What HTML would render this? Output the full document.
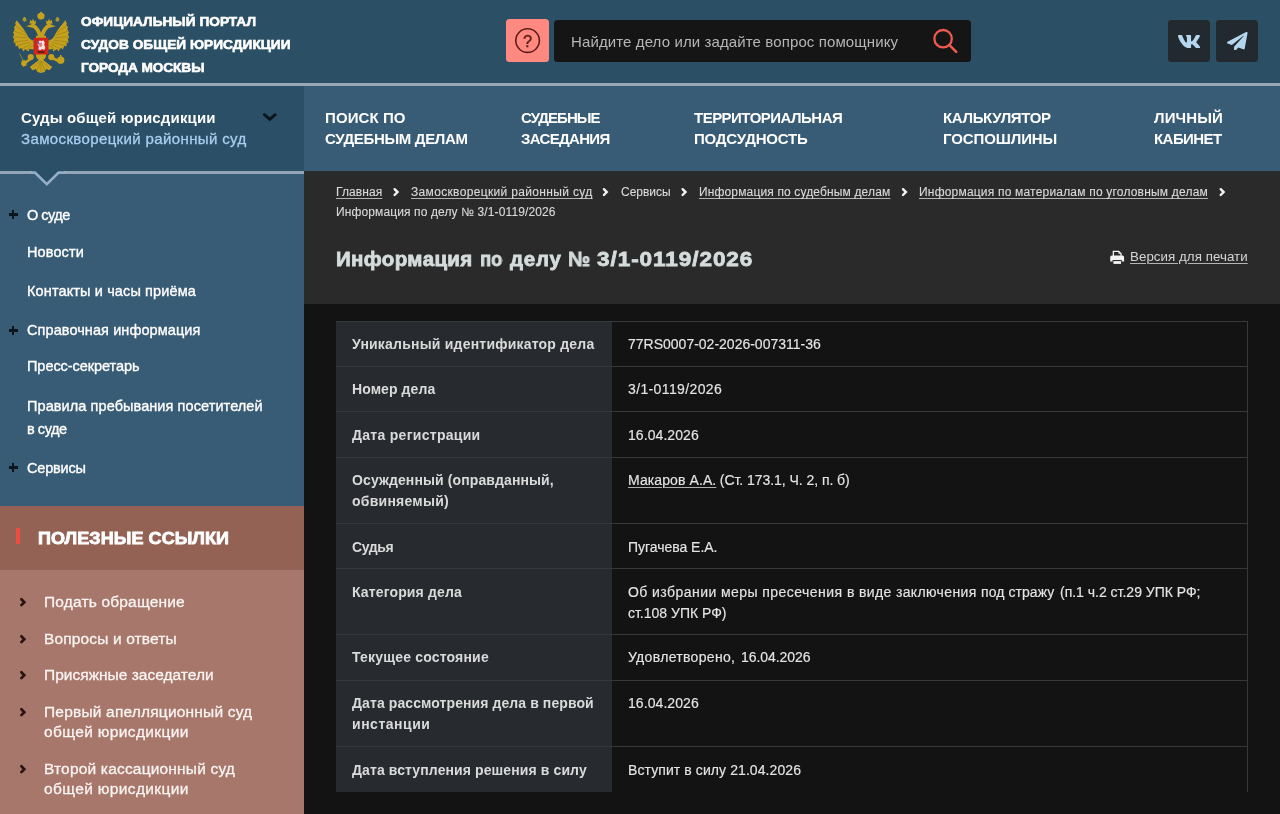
<!DOCTYPE html>
<html lang="ru">
<head>
<meta charset="utf-8">
<title>Информация по делу № 3/1-0119/2026</title>
<style>
*{box-sizing:border-box;margin:0;padding:0}
html,body{width:1280px;height:814px;overflow:hidden;background:#131313}
body{font-family:"Liberation Sans",sans-serif;color:#fff;position:relative}
.a{position:absolute}
.x{position:absolute;white-space:nowrap;line-height:normal;will-change:transform}
.u{text-decoration:underline;text-decoration-thickness:1px;text-underline-offset:2px;text-decoration-color:rgba(215,215,215,.8)}
#header{left:0;top:0;width:1280px;height:83px;background:#2b5065}
#hline{left:0;top:83px;width:1280px;height:3px;background:#98a8b6}
#court{left:0;top:86px;width:304px;height:85px;background:#2a4f66}
#nav{left:304px;top:86px;width:976px;height:85px;background:#385c75}
#side{left:0;top:171px;width:304px;height:335px;background:#385c75}
#sline{left:0;top:171px;width:304px;height:3px;background:#93a6b8}
#ulhb{left:0;top:506px;width:304px;height:64px;background:#936254}
#ulb{left:0;top:570px;width:304px;height:244px;background:#a7776b}
#ctop{left:304px;top:171px;width:976px;height:133px;background:#2b2a2a}
#cbody{left:304px;top:304px;width:976px;height:510px;background:#131313}
.ht{font-weight:bold;font-size:13px;-webkit-text-stroke:.6px #fff}
.ph{font-size:15px;color:#b6b6b6}
.c1{font-size:15px;font-weight:bold;color:#fff}
.c2{font-size:15px;color:#a9cef1;-webkit-text-stroke:.3px #a9cef1}
.nv{font-weight:bold;font-size:15px;color:#fff}
.sm{font-size:14.5px;color:#fff;-webkit-text-stroke:.35px #fff}
.ulh{font-size:16.5px;font-weight:bold;color:#fff;-webkit-text-stroke:.8px #fff}
.ul{font-size:15.5px;color:#faf4f2;-webkit-text-stroke:.3px #faf4f2}
.bc{font-size:12px;color:#d9d9d9;-webkit-text-stroke:.12px #d9d9d9}
.h1{font-size:20.5px;font-weight:bold;color:#d5dcdc;-webkit-text-stroke:.8px #d5dcdc}
.pv{font-size:13.3px;color:#d6d6d6}
.tl{font-size:14px;font-weight:bold;color:#dadada}
.tv{font-size:14px;color:#e4e4e4;-webkit-text-stroke:.15px #e4e4e4}
.plus{position:absolute;left:8.5px;width:9px;height:9px}
.plus:before{content:"";position:absolute;left:0;top:3.2px;width:9px;height:2.6px;background:#0b151c}
.plus:after{content:"";position:absolute;left:3.2px;top:0;width:2.6px;height:9px;background:#0b151c}
#table{position:absolute;left:336px;top:0;width:912px;height:814px}
.row{position:absolute;left:0;width:912px;border-top:1px solid #383838;border-right:1px solid #383838}
.row i{position:absolute;left:0;top:-1px;bottom:0;width:276px;background:#272b2f;border-top:1px solid #34383c}
</style>
</head>
<body>
<div class="a" id="header"></div>
<div class="a" id="hline"></div>
<div class="a" id="court"></div>
<div class="a" id="nav"></div>
<div class="a" id="side"></div>
<div class="a" id="sline"></div>
<div class="a" id="ulhb"></div>
<div class="a" id="ulb"></div>
<div class="a" id="ctop"></div>
<div class="a" id="cbody"></div>

<svg class="a" id="emblem" style="left:6px;top:4px" width="70" height="74" viewBox="0 0 770 814">
<g fill="#c5a11e">
<path d="M385 82 L400 100 C425 105 432 135 418 158 C405 176 365 176 352 158 C338 135 345 105 370 100Z"/>
<path d="M205 140 L222 156 L226 184 L204 194 L184 184 L184 158Z" opacity=".85"/><path d="M565 140 L548 156 L544 184 L566 194 L586 184 L586 158Z" opacity=".85"/>
<path d="M374 356 C366 312 344 268 300 238" fill="none" stroke="#c5a11e" stroke-width="42" stroke-linecap="round"/>
<path d="M396 356 C404 312 426 268 470 238" fill="none" stroke="#c5a11e" stroke-width="42" stroke-linecap="round"/>
<path d="M296 216 L222 246 L300 264Z"/><path d="M474 216 L548 246 L470 264Z"/>
<path d="M258 214 L268 172 L286 190 L296 160 L310 192 L328 180 L326 222Z"/><path d="M512 214 L502 172 L484 190 L474 160 L460 192 L442 180 L444 222Z"/>
<path d="M118 178 L100 215 L108 225 L86 262 L97 272 L76 318 L90 326 L74 372 L90 378 L82 425 L102 424 L106 468 L128 458 L146 500 L164 482 L196 522 L208 496 L250 522 L256 494 L305 500 L305 400 C272 396 242 372 228 334 C208 284 168 246 118 178Z"/>
<path d="M652 178 L670 215 L662 225 L684 262 L673 272 L694 318 L680 326 L696 372 L680 378 L688 425 L668 424 L664 468 L642 458 L624 500 L606 482 L574 522 L562 496 L520 522 L514 494 L465 500 L465 400 C498 396 528 372 542 334 C562 284 602 246 652 178Z"/>
<path d="M330 350 H440 V560 C440 600 410 620 385 620 C360 620 330 600 330 560Z"/>
<circle cx="272" cy="584" r="34"/><circle cx="498" cy="584" r="34"/>
<path d="M262 592 L196 640 L210 662 L282 612Z"/><path d="M200 612 L232 640 L222 678 L186 690 L166 660 L172 628Z"/>
<path d="M500 575 L580 610 L572 640 L492 602Z"/><circle cx="602" cy="618" r="40"/><path d="M594 560 H610 V585 H594Z"/>
<path d="M385 590 C352 630 300 655 262 692 L292 730 L328 716 L346 748 L385 760 L424 748 L442 716 L478 730 L508 692 C470 655 418 630 385 590Z"/>
</g>
<g fill="none" stroke="#8a7216" stroke-width="7" opacity=".75">
<path d="M105 240 L215 318 M92 300 L222 345 M86 360 L232 372 M92 418 L246 398 M120 460 L262 420 M170 495 L280 440 M228 508 L296 455"/>
<path d="M665 240 L555 318 M678 300 L548 345 M684 360 L538 372 M678 418 L524 398 M650 460 L508 420 M600 495 L490 440 M542 508 L474 455"/>
<path d="M300 700 L375 625 M340 735 L382 630 M385 750 L385 630 M430 735 L388 630 M470 700 L395 625"/>
<path d="M150 545 L196 640" stroke="#c5a11e" stroke-width="9" opacity="1"/>
</g>
<path d="M180 235 C215 275 245 320 262 372 C275 398 295 410 305 412" fill="none" stroke="#2b5065" stroke-width="9" opacity=".5"/>
<path d="M590 235 C555 275 525 320 508 372 C495 398 475 410 465 412" fill="none" stroke="#2b5065" stroke-width="9" opacity=".5"/>
<rect x="305" y="372" width="160" height="184" rx="10" fill="#d3261b"/>
<path d="M352 420 L372 402 L392 408 L410 398 L426 422 L420 446 L432 480 L420 506 L398 494 L376 510 L356 498 L362 466 L348 448Z" fill="#efe4e8"/>
<path d="M366 430 L392 420 L400 450 L384 476 L364 462Z" fill="#d3261b" opacity=".55"/>
<path d="M340 405 L370 428 L352 452Z" fill="#525aa8"/>
<path d="M350 520 H425 V538 H350Z" fill="#3a1512" opacity=".8"/>
</svg>

<div class="a" style="left:506px;top:19px;width:43px;height:43px;background:#fe8980;border-radius:3.5px"></div>
<svg class="a" style="left:513px;top:26px;will-change:transform" width="30" height="30" viewBox="0 0 30 30"><circle cx="14.6" cy="14.6" r="11.8" fill="none" stroke="#5e1d16" stroke-width="1.6"/><text x="14.6" y="21" text-anchor="middle" font-family="Liberation Sans, sans-serif" font-size="16.5" fill="#5e1d16" stroke="#5e1d16" stroke-width=".4">?</text></svg>
<div class="a" style="left:554px;top:20px;width:417px;height:42px;background:#151515;border-radius:3.5px"></div>
<svg class="a" style="left:929px;top:25px" width="32" height="32" viewBox="0 0 32 32"><circle cx="14.1" cy="13.7" r="8.7" fill="none" stroke="#ef5a4f" stroke-width="2.3"/><path d="M20.5 20.2 L27.2 26.8" stroke="#ef5a4f" stroke-width="2.5" stroke-linecap="round"/></svg>

<div class="a" style="left:1168px;top:20px;width:42px;height:42px;background:#22292f;border-radius:3.5px"></div>
<div class="a" style="left:1216px;top:20px;width:42px;height:42px;background:#22292f;border-radius:3.5px"></div>
<svg class="a" style="left:1178px;top:34.5px" width="22.4" height="13.4" viewBox="18 96 540 320"><path fill="#b5d6ef" d="M545 117.7c3.7-12.5 0-21.7-17.8-21.7h-58.9c-15 0-21.9 7.9-25.6 16.7 0 0-30 73.1-72.4 120.5-13.7 13.7-20 18.1-27.5 18.1-3.7 0-9.4-4.4-9.4-16.9V117.7c0-15-4.2-21.7-16.6-21.7h-92.6c-9.4 0-15 7-15 13.5 0 14.2 21.2 17.5 23.4 57.5v86.8c0 19-3.4 22.5-10.9 22.5-20 0-68.6-73.4-97.4-157.4-5.8-16.3-11.5-22.9-26.6-22.9H38.8c-16.8 0-20.2 7.9-20.2 16.7 0 15.6 20 93.1 93.1 195.5C160.4 378.1 229 416 291.4 416c37.5 0 42.1-8.4 42.1-22.9 0-66.8-3.4-73.1 15.4-73.1 8.7 0 23.7 4.4 58.7 38.1 40 40 46.6 57.9 69 57.9h58.9c16.8 0 25.3-8.4 20.4-25-11.2-34.9-86.9-106.7-90.3-111.5-8.7-11.2-6.2-16.2 0-26.2.1-.1 72-101.3 79.4-135.6z"/></svg>
<svg class="a" style="left:1227px;top:31.6px" width="20.6" height="18.6" viewBox="0 0 512 512" preserveAspectRatio="none"><path fill="#b5d6ef" d="M476 3.2L12.5 270.6c-18.1 10.4-15.8 35.6 2.2 43.2L121 358.4l287.3-253.2c5.5-4.9 13.3 2.6 8.6 8.3L176 407v80.5c0 23.6 28.5 32.9 42.5 15.8L282 426l124.6 52.2c14.2 6 30.4-2.9 33-18.2l72-432C515 7.8 493.3-6.8 476 3.2z"/></svg>

<svg class="a" style="left:260px;top:111px" width="19" height="13" viewBox="0 0 19 13"><path d="M4.4 3.7 L9.8 8.3 L15.2 3.7" fill="none" stroke="#0a1318" stroke-width="2.9" stroke-linecap="round" stroke-linejoin="miter"/></svg>
<svg class="a" style="left:30px;top:171px" width="36" height="18" viewBox="0 0 36 18"><path d="M2 0 H34 V2 H2Z" fill="#2a4f66"/><path d="M0 1.5 H5 L16.8 13.2 L28.6 1.5 H36" fill="#2a4f66" stroke="#93aec5" stroke-width="2.7" stroke-linejoin="miter"/></svg>

<div class="plus" style="top:210.2px"></div>
<div class="plus" style="top:326px"></div>
<div class="plus" style="top:463px"></div>

<div class="a" style="left:16.2px;top:527.5px;width:4.2px;height:16.3px;background:#ea4f3f"></div>

<svg class="a" style="left:0;top:0" width="1280" height="814" viewBox="0 0 1280 814">
<g fill="none" stroke="#f2f2f2" stroke-width="2.4" stroke-linecap="round" stroke-linejoin="miter">
<path d="M394.6 189.2 L397.5 192.1 L394.6 195"/>
<path d="M603.9 189.2 L606.8 192.1 L603.9 195"/>
<path d="M682.6 189.2 L685.5 192.1 L682.6 195"/>
<path d="M903.0 189.2 L905.9 192.1 L903.0 195"/>
<path d="M1220.7 189.2 L1223.6 192.1 L1220.7 195"/>
</g>
<g fill="none" stroke="#2a1411" stroke-width="2.7" stroke-linecap="round" stroke-linejoin="miter">
<path d="M21.4 599.3 L24.3 602.2 L21.4 605.1"/>
<path d="M21.4 636.3 L24.3 639.2 L21.4 642.1"/>
<path d="M21.4 672.3 L24.3 675.2 L21.4 678.1"/>
<path d="M21.4 709.3 L24.3 712.2 L21.4 715.1"/>
<path d="M21.4 766.3 L24.3 769.2 L21.4 772.1"/>
</g>
<g fill="#f4f4f4">
<path d="M1112.7 250.8 h6.3 l2.7 2.7 v3.5 h-9z M1114 252.1 v4 h6.4 v-2.3 h-1.9 v-1.7z" fill-rule="evenodd"/>
<path d="M1110.2 257.2 q0 -1.7 1.7 -1.7 h10.5 q1.7 0 1.7 1.7 v4.4 h-2.4 v-1.5 h-9.1 v1.5 h-2.4z"/>
<path d="M1113.4 261.1 h7.6 v2.8 h-7.6z"/>
</g>
</svg>

<div id="table">
<div class="row" style="top:321px;height:45px"><i></i></div>
<div class="row" style="top:366px;height:45px"><i></i></div>
<div class="row" style="top:411px;height:46px"><i></i></div>
<div class="row" style="top:457px;height:66px"><i></i></div>
<div class="row" style="top:523px;height:45px"><i></i></div>
<div class="row" style="top:568px;height:66px"><i></i></div>
<div class="row" style="top:634px;height:46px"><i></i></div>
<div class="row" style="top:680px;height:66px"><i></i></div>
<div class="row" style="top:746px;height:46px"><i></i></div>
</div>
<div id="t0" class="x ht" style="left:81px;top:14px;letter-spacing:0.025px;transform:scaleX(1.05);transform-origin:0 0;">ОФИЦИАЛЬНЫЙ ПОРТАЛ</div>
<div id="t1" class="x ht" style="left:81px;top:37px;letter-spacing:0.038px;transform:scaleX(1.05);transform-origin:0 0;">СУДОВ ОБЩЕЙ ЮРИСДИКЦИИ</div>
<div id="t2" class="x ht" style="left:81px;top:60px;letter-spacing:-0.064px;transform:scaleX(1.05);transform-origin:0 0;">ГОРОДА МОСКВЫ</div>
<div id="t3" class="x ph" style="left:571px;top:33px;letter-spacing:0.113px;">Найдите дело или задайте вопрос помощнику</div>
<div id="t4" class="x c1" style="left:21px;top:109px;letter-spacing:0.146px;">Суды общей юрисдикции</div>
<div id="t5" class="x c2" style="left:21px;top:130px;letter-spacing:0.371px;">Замоскворецкий районный суд</div>
<div id="t6" class="x nv" style="left:325px;top:109px;letter-spacing:0.094px;">ПОИСК ПО</div>
<div id="t7" class="x nv" style="left:325px;top:130px;letter-spacing:-0.339px;">СУДЕБНЫМ ДЕЛАМ</div>
<div id="t8" class="x nv" style="left:521.3px;top:109px;letter-spacing:-0.958px;">СУДЕБНЫЕ</div>
<div id="t9" class="x nv" style="left:521.3px;top:130px;letter-spacing:-0.676px;">ЗАСЕДАНИЯ</div>
<div id="t10" class="x nv" style="left:694.25px;top:109px;letter-spacing:-0.517px;">ТЕРРИТОРИАЛЬНАЯ</div>
<div id="t11" class="x nv" style="left:694.25px;top:130px;letter-spacing:-0.198px;">ПОДСУДНОСТЬ</div>
<div id="t12" class="x nv" style="left:943.25px;top:109px;letter-spacing:-0.355px;">КАЛЬКУЛЯТОР</div>
<div id="t13" class="x nv" style="left:943.25px;top:130px;letter-spacing:-0.101px;">ГОСПОШЛИНЫ</div>
<div id="t14" class="x nv" style="left:1154.25px;top:109px;letter-spacing:0.119px;">ЛИЧНЫЙ</div>
<div id="t15" class="x nv" style="left:1154.25px;top:130px;letter-spacing:-0.552px;">КАБИНЕТ</div>
<div id="t16" class="x sm" style="left:27.4px;top:207px;letter-spacing:-0.502px;">О суде</div>
<div id="t17" class="x sm" style="left:27.4px;top:244px;letter-spacing:0.118px;">Новости</div>
<div id="t18" class="x sm" style="left:27.4px;top:283px;letter-spacing:0.125px;">Контакты и часы приёма</div>
<div id="t19" class="x sm" style="left:27.4px;top:322px;letter-spacing:0.082px;">Справочная информация</div>
<div id="t20" class="x sm" style="left:27.4px;top:358px;letter-spacing:-0.054px;">Пресс-секретарь</div>
<div id="t21" class="x sm" style="left:27.4px;top:398.3px;letter-spacing:0.082px;">Правила пребывания посетителей</div>
<div id="t22" class="x sm" style="left:27.4px;top:421px;letter-spacing:-0.436px;">в суде</div>
<div id="t23" class="x sm" style="left:27.4px;top:459.5px;letter-spacing:-0.205px;">Сервисы</div>
<div id="t24" class="x ulh" style="left:38.2px;top:529px;letter-spacing:0.065px;transform:scaleX(1.09);transform-origin:0 0;">ПОЛЕЗНЫЕ ССЫЛКИ</div>
<div id="t25" class="x ul" style="left:43.6px;top:593.2px;letter-spacing:0.176px;">Подать обращение</div>
<div id="t26" class="x ul" style="left:43.6px;top:630px;letter-spacing:0.140px;">Вопросы и ответы</div>
<div id="t27" class="x ul" style="left:43.6px;top:666.4px;letter-spacing:0.014px;">Присяжные заседатели</div>
<div id="t28" class="x ul" style="left:43.6px;top:703.2px;letter-spacing:0.192px;">Первый апелляционный суд</div>
<div id="t29" class="x ul" style="left:43.6px;top:723.2px;letter-spacing:0.360px;">общей юрисдикции</div>
<div id="t30" class="x ul" style="left:43.6px;top:760px;letter-spacing:0.184px;">Второй кассационный суд</div>
<div id="t31" class="x ul" style="left:43.6px;top:780px;letter-spacing:0.360px;">общей юрисдикции</div>
<div id="t32" class="x bc u" style="left:336.25px;top:185px;letter-spacing:0.094px;">Главная</div>
<div id="t33" class="x bc u" style="left:410.5px;top:185px;letter-spacing:0.338px;">Замоскворецкий районный суд</div>
<div id="t34" class="x bc" style="left:620.5px;top:185px;letter-spacing:-0.036px;">Сервисы</div>
<div id="t35" class="x bc u" style="left:698.75px;top:185px;letter-spacing:0.144px;">Информация по судебным делам</div>
<div id="t36" class="x bc u" style="left:919.25px;top:185px;letter-spacing:0.195px;">Информация по материалам по уголовным делам</div>
<div id="t37" class="x bc" style="left:336.25px;top:205px;letter-spacing:0.116px;">Информация по делу № 3/1-0119/2026</div>
<div id="t38" class="x h1" style="left:336.4px;top:247px;letter-spacing:0.363px;">Информация</div>
<div id="t39" class="x h1" style="left:480.4px;top:247px;letter-spacing:-0.128px;transform:scaleX(0.9);transform-origin:0 0;">по</div>
<div id="t40" class="x h1" style="left:510.2px;top:247px;letter-spacing:0.741px;">делу</div>
<div id="t41" class="x h1" style="left:568px;top:247px;letter-spacing:0.233px;transform:scaleX(0.97);transform-origin:0 0;">№</div>
<div id="t42" class="x h1" style="left:596.5px;top:247px;letter-spacing:0.847px;transform:scaleX(1.1);transform-origin:0 0;">3/1-0119/2026</div>
<div id="t43" class="x pv u" style="left:1129.8px;top:249.3px;letter-spacing:0.059px;">Версия для печати</div>
<div id="t44" class="x tl" style="left:351.8px;top:336px;letter-spacing:0.210px;">Уникальный идентификатор дела</div>
<div id="t45" class="x tv" style="left:628px;top:336px;">77RS0007-02-2026-007311-36</div>
<div id="t46" class="x tl" style="left:351.8px;top:381px;letter-spacing:0.086px;">Номер дела</div>
<div id="t47" class="x tv" style="left:628px;top:381px;letter-spacing:0.374px;">3/1-0119/2026</div>
<div id="t48" class="x tl" style="left:351.8px;top:427px;letter-spacing:0.288px;">Дата регистрации</div>
<div id="t49" class="x tv" style="left:628px;top:427px;letter-spacing:0.075px;">16.04.2026</div>
<div id="t50" class="x tl" style="left:351.8px;top:472px;letter-spacing:0.107px;">Осужденный (оправданный,</div>
<div id="t51" class="x tl" style="left:351.8px;top:493px;letter-spacing:0.247px;">обвиняемый)</div>
<div id="t52" class="x tv u" style="left:628px;top:472px;letter-spacing:0.097px;">Макаров А.А.</div>
<div id="t53" class="x tv" style="left:716.25px;top:472px;letter-spacing:-0.048px;white-space:pre;"> (Ст. 173.1, Ч. 2, п. б)</div>
<div id="t54" class="x tl" style="left:351.8px;top:539px;letter-spacing:-0.380px;">Судья</div>
<div id="t55" class="x tv" style="left:628px;top:539px;letter-spacing:-0.029px;">Пугачева Е.А.</div>
<div id="t56" class="x tl" style="left:351.8px;top:584px;letter-spacing:0.137px;">Категория дела</div>
<div id="t57" class="x tv" style="left:628px;top:584px;letter-spacing:0.439px;">Об избрании меры пресечения</div>
<div id="t58" class="x tv" style="left:847.0px;top:584px;letter-spacing:0.359px;white-space:pre;">в виде заключения</div>
<div id="t59" class="x tv" style="left:981.25px;top:584px;letter-spacing:0.069px;white-space:pre;">под стражу</div>
<div id="t60" class="x tv" style="left:1060.0px;top:584px;letter-spacing:-0.005px;white-space:pre;">(п.1 ч.2 ст.29 УПК РФ;</div>
<div id="t61" class="x tv" style="left:628px;top:605px;">ст.108 УПК РФ)</div>
<div id="t62" class="x tl" style="left:351.8px;top:649px;letter-spacing:0.186px;">Текущее состояние</div>
<div id="t63" class="x tv" style="left:628px;top:649px;letter-spacing:0.321px;">Удовлетворено,</div>
<div id="t64" class="x tv" style="left:741.25px;top:649px;letter-spacing:-0.064px;white-space:pre;">16.04.2026</div>
<div id="t65" class="x tl" style="left:351.8px;top:695px;letter-spacing:0.089px;">Дата рассмотрения дела в первой</div>
<div id="t66" class="x tl" style="left:351.8px;top:716px;letter-spacing:0.521px;">инстанции</div>
<div id="t67" class="x tv" style="left:628px;top:695px;letter-spacing:0.075px;">16.04.2026</div>
<div id="t68" class="x tl" style="left:351.8px;top:762px;letter-spacing:0.103px;">Дата вступления решения в силу</div>
<div id="t69" class="x tv" style="left:628px;top:762px;letter-spacing:0.088px;">Вступит в силу 21.04.2026</div>
</body>
</html>
